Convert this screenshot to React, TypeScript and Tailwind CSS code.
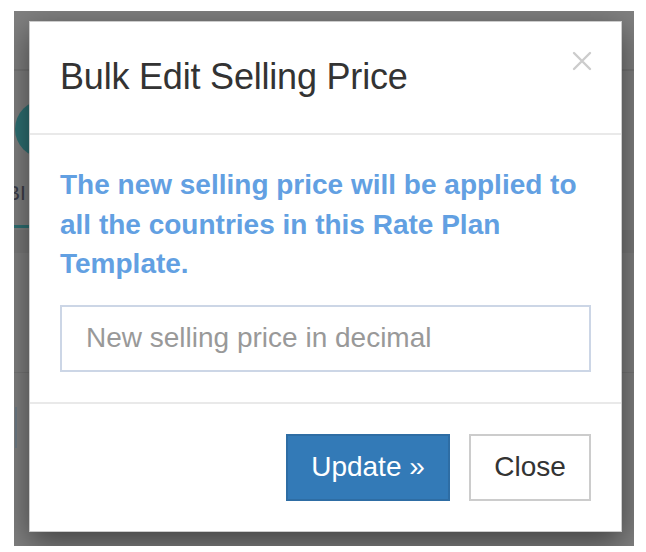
export default function App() {
  return (
    <div className="w-[646px] h-[552px] bg-white pl-[14px] pt-[11px] pr-[12px] pb-[6px] font-['Liberation_Sans',Arial,sans-serif]">
      {/* page behind the modal backdrop */}
      <div className="relative w-[620px] h-[535px] bg-[#808080] overflow-hidden flex flex-col">
        <div className="h-[60px] shrink-0 border-b-2 border-[#767676]" />
        <div className="pt-[29px] pl-[1px]">
          <div className="w-[60px] h-[58px] rounded-full bg-[#2e7073]" />
        </div>
        <div className="pt-[23px] ml-[-8px] text-[21px] leading-[24px] text-[#3c3c48]">BI</div>
        <div className="mt-[20px] w-[40px] h-[3px] bg-[#2e7073]" />
        <div className="mt-[2px] h-[23px] bg-[#7a7a7a]" />
        <div className="mt-[119px] h-px bg-[#767676]" />
        <div className="mt-[34px] ml-[1px] w-[2px] h-[41px] bg-[#6d7a84]" />

        {/* modal dialog */}
        <div className="absolute left-[15px] top-[10px] w-[593px] bg-white border border-[rgba(0,0,0,0.2)] shadow-[0_10px_30px_rgba(0,0,0,0.5)]">
          <div className="flex items-start justify-between px-[30px] pt-[29px] pb-[31px] border-b-2 border-[#e9e9e9]">
            <h4 className="text-[36px] leading-[51px] text-[#333] font-normal tracking-[-0.2px]">Bulk Edit Selling Price</h4>
            <button className="mt-0 mr-[-1px] p-0">
              <svg width="20" height="20" viewBox="0 0 20 20">
                <path d="M2 2 L18 18 M18 2 L2 18" stroke="#cccccc" strokeWidth="2.4" strokeLinecap="round" />
              </svg>
            </button>
          </div>
          <div className="p-[30px]">
            <p className="text-[28px] leading-[39.5px] font-bold text-[#62a0e2] mb-[21px]">
              The new selling price will be applied to all the countries in this Rate Plan Template.
            </p>
            <input
              type="text"
              placeholder="New selling price in decimal"
              className="block w-full h-[67px] px-[24px] border-2 border-[#ccd6e6] text-[28px] text-[#555] placeholder:text-[#999] outline-none"
            />
          </div>
          <div className="flex justify-end gap-[19px] p-[30px] border-t-2 border-[#e9e9e9]">
            <button className="h-[67px] w-[164px] bg-[#337ab7] border-2 border-[#2e6da4] text-white text-[28px]">
              Update »
            </button>
            <button className="h-[67px] w-[122px] bg-white border-2 border-[#cccccc] text-[#333] text-[28px]">
              Close
            </button>
          </div>
        </div>
      </div>
    </div>
  );
}
